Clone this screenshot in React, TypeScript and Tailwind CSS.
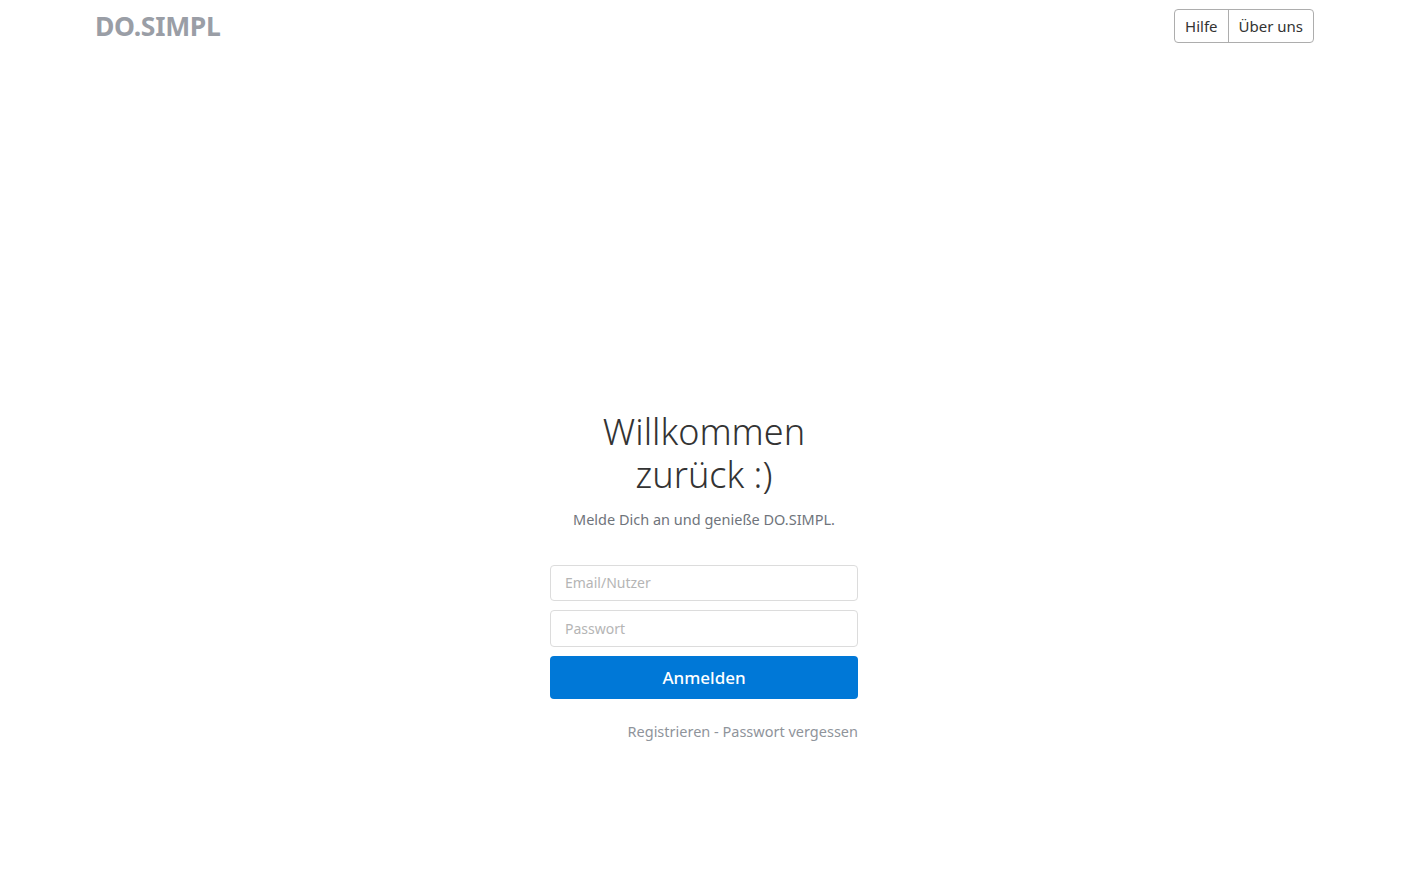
export default function App() {
  return (
    <div className="min-h-screen bg-white font-['Noto_Sans','Open_Sans',sans-serif] text-[#333]">
      {/* header */}
      <div className="flex items-center justify-between pl-[95px] pr-[96px] pt-[9px]">
        <div className="text-[26.5px] font-bold leading-[34px] tracking-[-0.3px] text-[#9a9ea6]">DO.SIMPL</div>
        <div className="flex h-[34px] rounded-[4px] border border-[#adadad] text-[15px] text-[#333]">
          <button className="px-[10px] border-r border-[#adadad]">Hilfe</button>
          <button className="px-[10px]">Über uns</button>
        </div>
      </div>

      {/* login */}
      <div className="flex justify-center pr-[2px] pt-[367px]">
        <div className="flex w-[308px] flex-col">
          <h1 className="text-center text-[36px] font-light leading-[43px] text-[#333]">
            Willkommen
            <br />
            zurück :)
          </h1>
          <p className="mt-[13px] text-center text-[14.5px] text-[#6f747b]">Melde Dich an und genieße DO.SIMPL.</p>

          <input
            placeholder="Email/Nutzer"
            className="mt-[34px] h-[36px] rounded-[4px] border border-[#dcdcdc] px-[14px] text-[14px] outline-none placeholder:text-[#b5b5b5]"
          />
          <input
            type="password"
            placeholder="Passwort"
            className="mt-[9px] h-[37px] rounded-[4px] border border-[#dcdcdc] px-[14px] text-[14px] outline-none placeholder:text-[#b5b5b5]"
          />
          <button className="mt-[9px] h-[43px] rounded-[4px] bg-[#0078d7] text-[17px] font-medium text-white">
            Anmelden
          </button>

          <div className="mt-[22px] text-right text-[14.5px] text-[#8f949b]">
            <a>Registrieren</a> - <a>Passwort vergessen</a>
          </div>
        </div>
      </div>
    </div>
  );
}
